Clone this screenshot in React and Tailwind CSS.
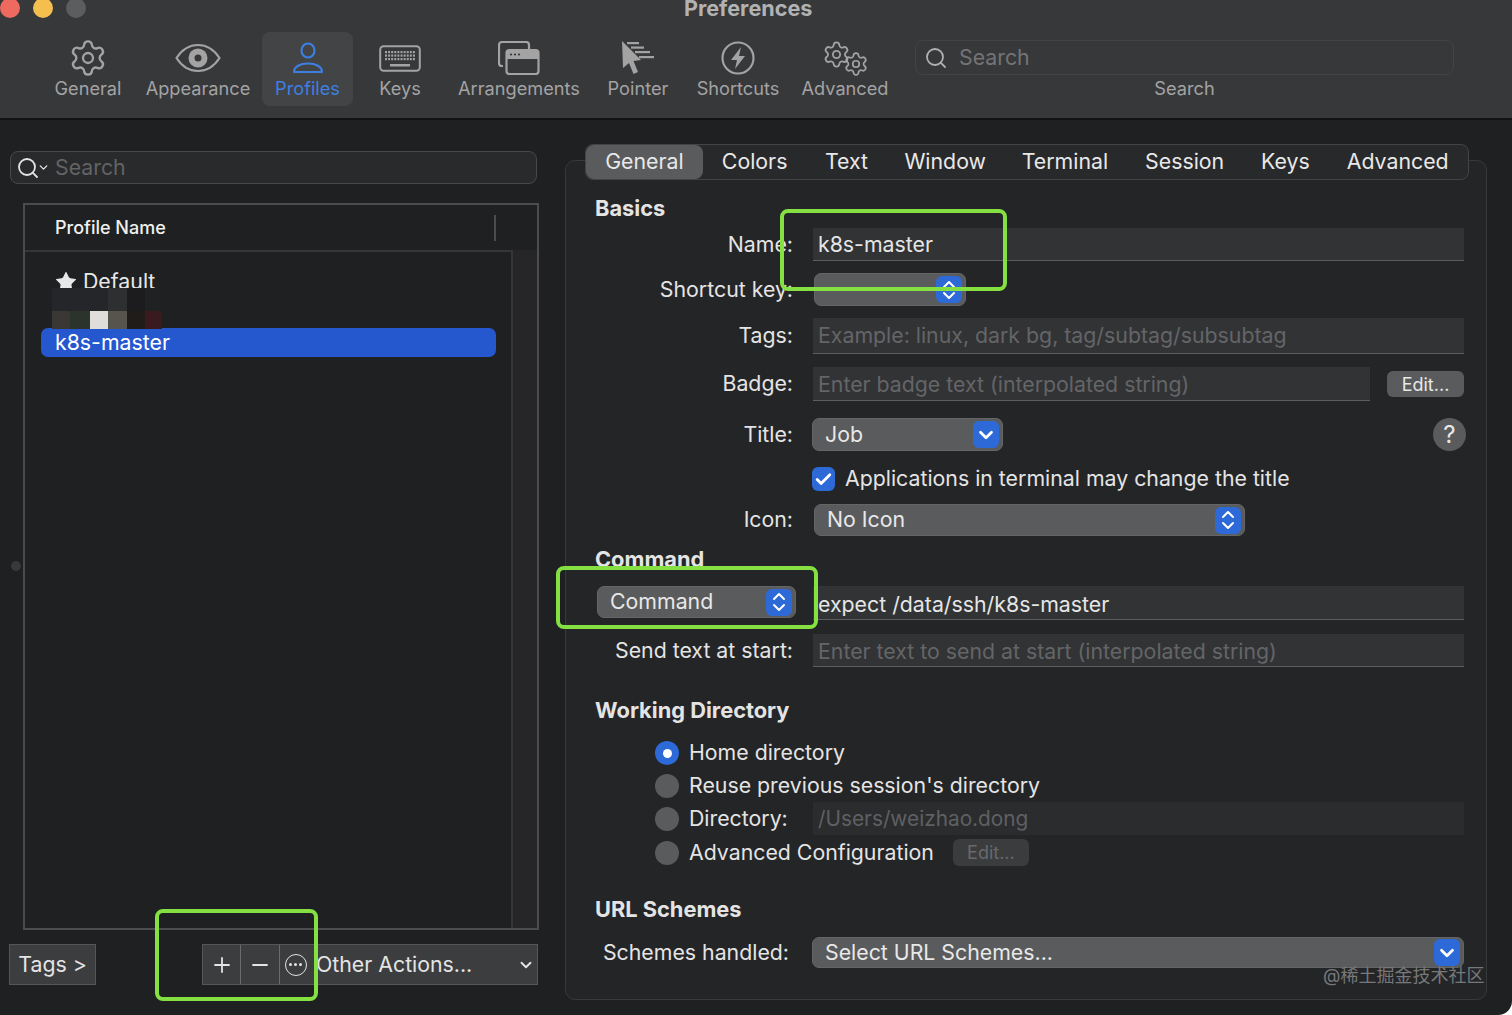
import { Settings, ChevronDown, Check, Plus, Minus, Search, Star } from "lucide-react";

const font = { fontFamily: "Inter, 'Noto Sans CJK SC', sans-serif" };

const EyeIcon = () => (
  <svg width="46" height="30" viewBox="0 0 46 30" fill="none">
    <path d="M1.500 15C7 6.500 14.500 2 23 2s16 4.500 21.500 13C39 23.500 31.500 28 23 28S7 23.500 1.500 15z" stroke="#a3a3a3" strokeWidth="2.200" />
    <circle cx="23" cy="15" r="9.500" fill="#a3a3a3" />
    <circle cx="23" cy="15" r="3.500" fill="#37383a" />
  </svg>
);

const UserIcon = () => (
  <svg width="32" height="32" viewBox="0 0 32 32" fill="none" stroke="#3d7fe0" strokeWidth="2.200">
    <ellipse cx="16" cy="8.500" rx="6.500" ry="7" />
    <path d="M2 30c0-5.500 6-8.500 14-8.500s14 3 14 8.500z" strokeLinejoin="round" />
  </svg>
);

const KeyboardIcon = () => (
  <svg width="42" height="27" viewBox="0 0 42 27" fill="none">
    <rect x="1.200" y="1.200" width="39.600" height="24.600" rx="3.500" stroke="#a3a3a3" strokeWidth="2" />
    {[0, 1, 2].map((row) =>
      [0, 1, 2, 3, 4, 5, 6, 7, 8, 9].map((col) => (
        <rect key={`${row}-${col}`} x={6 + col * 3.100} y={6 + row * 3.500} width="2" height="2.200" fill="#a3a3a3" />
      ))
    )}
    <rect x="11" y="19" width="20" height="2.500" fill="#a3a3a3" />
  </svg>
);

const WindowsIcon = () => (
  <svg width="42" height="34" viewBox="0 0 42 34" fill="none" stroke="#a3a3a3" strokeWidth="2.200">
    <path d="M5 25H4a3 3 0 0 1-3-3V4a3 3 0 0 1 3-3h24a3 3 0 0 1 3 3v5" />
    <rect x="8.500" y="9" width="32" height="24" rx="3" />
    <path d="M9 10h31v8H9z" fill="#a3a3a3" stroke="none" />
    <circle cx="13" cy="13.500" r="1.100" fill="#37383a" stroke="none" />
    <circle cx="17" cy="13.500" r="1.100" fill="#37383a" stroke="none" />
    <circle cx="21" cy="13.500" r="1.100" fill="#37383a" stroke="none" />
  </svg>
);

const PointerIcon = () => (
  <svg width="34" height="34" viewBox="0 0 34 34" fill="#a3a3a3">
    <path d="M1 0l19 19-7.500 1 4.500 11-4.500 2-4.500-11L2 27z" />
    <rect x="6" y="1" width="12" height="2.200" />
    <rect x="10" y="5.500" width="13" height="2.200" />
    <rect x="14" y="10" width="15" height="2.200" />
    <rect x="18" y="15" width="15" height="2.200" />
  </svg>
);

const ShortcutIcon = () => (
  <svg width="34" height="34" viewBox="0 0 34 34" fill="none">
    <circle cx="17" cy="17" r="15.500" stroke="#a3a3a3" strokeWidth="2.200" />
    <path d="M20 6L10 19h6l-2 9 10-13h-6z" fill="#a3a3a3" />
  </svg>
);

const GearsIcon = () => (
  <div className="relative w-[47px] h-[37px]">
    <Settings size={29} strokeWidth={1.500} color="#a3a3a3" className="absolute left-0 top-0" />
    <Settings size={26} strokeWidth={1.600} color="#a3a3a3" className="absolute right-0 bottom-0" />
  </div>
);

const UpDownIcon = () => (
  <svg width="16" height="24" viewBox="0 0 16 24" fill="none" stroke="#ffffff" strokeWidth="2" strokeLinecap="round" strokeLinejoin="round">
    <path d="M3 9l5-5 5 5M3 15l5 5 5-5" />
  </svg>
);

const toolbarItems = [
  { label: "General", w: "w-[92px]", icon: <Settings size={40} strokeWidth={1.400} color="#a3a3a3" /> },
  { label: "Appearance", w: "w-[128px]", icon: <EyeIcon /> },
  { label: "Profiles", w: "w-[91px]", icon: <UserIcon />, active: true },
  { label: "Keys", w: "w-[94px]", icon: <KeyboardIcon /> },
  { label: "Arrangements", w: "w-[144px]", icon: <WindowsIcon /> },
  { label: "Pointer", w: "w-[94px]", icon: <PointerIcon /> },
  { label: "Shortcuts", w: "w-[106px]", icon: <ShortcutIcon /> },
  { label: "Advanced", w: "w-[108px]", icon: <GearsIcon /> },
];

const tabs = [
  { label: "General", w: "w-[117px]" },
  { label: "Colors", w: "w-[104px]" },
  { label: "Text", w: "w-[80px]" },
  { label: "Window", w: "w-[118px]" },
  { label: "Terminal", w: "w-[122px]" },
  { label: "Session", w: "w-[118px]" },
  { label: "Keys", w: "w-[84px]" },
  { label: "Advanced", w: "w-[141px]" },
];

const Stepper = ({ single }) => (
  <div className="w-[26px] h-[27px] rounded-[6px] bg-[#2d6ad8] flex items-center justify-center shrink-0 text-white">
    {single ? <ChevronDown size={22} strokeWidth={3} /> : <UpDownIcon />}
  </div>
);

const Popup = ({ text, single, className }) => (
  <div className={`flex items-center justify-between rounded-[7px] bg-[#5a5b5d] border border-[#646567] pl-[12px] pr-[3px] text-[#e8e8e8] ${className}`}>
    <span>{text}</span>
    <Stepper single={single} />
  </div>
);

const TextField = ({ text, placeholder, className = "flex-1" }) => (
  <div className={`h-full flex items-center pl-[5px] bg-[#323335] border-b border-[#5c5d5f] ${placeholder ? "text-[#646567]" : "text-[#e6e6e6]"} ${className}`}>
    {text || placeholder}
  </div>
);

const Label = ({ children }) => <div className="w-[227px] text-right text-[#e4e4e4] shrink-0">{children}</div>;

const Heading = ({ children, className }) => (
  <div className={`h-[24px] flex items-center font-bold text-[21.800px] text-[#e4e4e4] ml-[29px] ${className}`}>{children}</div>
);

const Row = ({ label, className, children }) => (
  <div className={`flex items-center gap-[20px] pr-[22px] ${className}`}>
    <Label>{label}</Label>
    {children}
  </div>
);

const Radio = ({ on }) => (
  <div className={`w-[24px] h-[24px] rounded-full flex items-center justify-center shrink-0 ${on ? "bg-[#2d6ad8]" : "bg-[#5a5b5d]"}`}>
    {on && <div className="w-[9px] h-[9px] rounded-full bg-white" />}
  </div>
);

const RadioRow = ({ on, label, className, children }) => (
  <div className={`flex items-center pl-[89px] pr-[22px] text-[#e4e4e4] ${className}`}>
    <Radio on={on} />
    <span className="ml-[10px]">{label}</span>
    {children}
  </div>
);

const GreenBox = ({ className }) => (
  <div className={`absolute border-[4px] border-[#84e141] rounded-[8px] pointer-events-none z-20 ${className}`} />
);

export default function App() {
  return (
    <div style={font} className="relative w-[1512px] h-[1015px] overflow-hidden bg-[#1f2022] rounded-br-[14px] text-[21.300px]">
      {/* Toolbar */}
      <div className="h-[120px] bg-[#37383a] border-b-2 border-[#111214]">
        <div className="flex items-center h-[16px] mb-[16px]">
          <div className="w-[20px] h-[20px] rounded-full bg-[#ee6a5f]" />
          <div className="w-[20px] h-[20px] rounded-full bg-[#f4bf4f] ml-[13px]" />
          <div className="w-[20px] h-[20px] rounded-full bg-[#5c5d5f] ml-[13px]" />
          <div className="ml-[598px] text-[21.600px] font-bold text-[#b2b2b2]">Preferences</div>
        </div>
        <div className="flex pl-[42px]">
          {toolbarItems.map((item) => (
            <div
              key={item.label}
              className={`${item.w} h-[74px] pt-[1px] rounded-[8px] flex flex-col items-center ${item.active ? "bg-[#434446]" : ""}`}
            >
              <div className="h-[50px] flex items-center justify-center">{item.icon}</div>
              <div className={`text-[18.200px] leading-[13px] mt-[-1px] ${item.active ? "text-[#3d7fe0]" : "text-[#a3a3a3]"}`}>{item.label}</div>
            </div>
          ))}
          <div className="ml-[16px] w-[539px] flex flex-col items-center">
            <div className="mt-[8px] w-full h-[35px] rounded-[8px] border border-[#434446] flex items-center pl-[8px] text-[#737476]">
              <Search size={24} strokeWidth={1.800} color="#b0b0b0" />
              <span className="ml-[11px]">Search</span>
            </div>
            <div className="mt-[2px] text-[18.200px] leading-[22px] text-[#a3a3a3]">Search</div>
          </div>
        </div>
      </div>

      <div className="flex">
        {/* Profile list */}
        <div className="w-[565px] shrink-0">
          <div className="ml-[10px] mt-[31px] w-[527px] h-[33px] rounded-[8px] bg-[#292a2c] border border-[#47484a] flex items-center pl-[5px] text-[#626365]">
            <Search size={24} strokeWidth={1.800} color="#e4e4e4" />
            <ChevronDown size={13} strokeWidth={2.500} color="#e4e4e4" className="-ml-[3px]" />
            <span className="ml-[5px]">Search</span>
          </div>
          <div className="ml-[23px] mt-[19px] w-[516px] h-[727px] border-2 border-[#4b4c4e] flex flex-col">
            <div className="h-[45px] flex items-center shrink-0">
              <div className="w-[471px] h-[26px] flex items-center pl-[30px] border-r-2 border-[#4b4c4e] text-[18px] font-medium text-[#f0f0f0]">
                Profile Name
              </div>
            </div>
            <div className="flex flex-1">
              <div className="w-[488px] border-t-2 border-r-2 border-[#35363a] pt-[19px]">
                <div className="h-[22px] flex items-center pl-[29px] text-[#e8e8e8]">
                  <Star size={24} fill="#e8e8e8" strokeWidth={0} />
                  <span className="ml-[5px]">Default</span>
                </div>
                <div className="mt-[35px] ml-[16px] w-[455px] h-[29px] rounded-[7px] bg-[#2557cf] flex items-center pl-[14px] text-white">
                  k8s-master
                </div>
              </div>
              <div className="flex-1 bg-[#262628]" />
            </div>
          </div>
          <div className="mt-[14px] flex h-[41px] ml-[9px] w-[529px] text-[#e4e4e4]">
            <div className="w-[87px] bg-[#3c3d3f] border border-[#555658] flex items-center justify-center">Tags &gt;</div>
            <div className="ml-[106px] flex-1 flex bg-[#3c3d3f] border border-[#555658]">
              <div className="w-[38px] border-r border-[#6b6c6e] flex items-center justify-center">
                <Plus size={24} strokeWidth={1.800} />
              </div>
              <div className="w-[39px] border-r border-[#6b6c6e] flex items-center justify-center">
                <Minus size={24} strokeWidth={1.800} />
              </div>
              <div className="w-[31px] flex items-center justify-center">
                <div className="w-[22px] h-[22px] rounded-full border-[1.500px] border-[#e4e4e4] flex items-center justify-center gap-[2px] shrink-0">
                  <div className="w-[3px] h-[3px] rounded-full bg-[#e4e4e4]" />
                  <div className="w-[3px] h-[3px] rounded-full bg-[#e4e4e4]" />
                  <div className="w-[3px] h-[3px] rounded-full bg-[#e4e4e4]" />
                </div>
              </div>
              <div className="flex-1 flex items-center justify-between pl-[5px] pr-[2px]">
                <span>Other Actions...</span>
                <ChevronDown size={18} strokeWidth={2.500} />
              </div>
            </div>
          </div>
        </div>

        {/* Profile settings */}
        <div className="w-[922px] flex flex-col">
          <div className="relative z-10 ml-[20px] mt-[24px] w-[884px] h-[36px] rounded-[8px] bg-[#28292b] border border-[#434446] flex items-center text-[#e8e8e8]">
            {tabs.map((tab, i) => (
              <div
                key={tab.label}
                className={`${tab.w} h-full flex items-center justify-center ${i === 0 ? "rounded-[8px] bg-[#5a5b5d]" : ""}`}
              >
                {tab.label}
              </div>
            ))}
          </div>
          <div className="-mt-[20px] h-[840px] rounded-[10px] bg-[#242527] border border-[#38393b] pt-[35px]">
            <Heading>Basics</Heading>
            <Row label="Name:" className="mt-[8px] h-[33px]">
              <TextField text="k8s-master" className="flex-1 pt-[2px]" />
            </Row>
            <Row label="Shortcut key:" className="mt-[12px] h-[33px]">
              <Popup className="w-[152px] h-full ml-[1px]" />
            </Row>
            <Row label="Tags:" className="mt-[12px] h-[36px]">
              <TextField placeholder="Example: linux, dark bg, tag/subtag/subsubtag" />
            </Row>
            <Row label="Badge:" className="mt-[13px] h-[34px]">
              <TextField placeholder="Enter badge text (interpolated string)" className="flex-1 pt-[3px]" />
              <div className="-ml-[3px] w-[77px] h-[26px] rounded-[6px] bg-[#5a5b5d] text-[18px] text-[#e8e8e8] flex items-center justify-center">Edit...</div>
            </Row>
            <Row label="Title:" className="mt-[17px] h-[33px]">
              <Popup text="Job" single className="w-[191px] h-full -ml-[1px]" />
              <div className="ml-auto -mr-[2px] w-[33px] h-[33px] rounded-full bg-[#5a5b5d] flex items-center justify-center text-[24px] text-[#e8e8e8]">?</div>
            </Row>
            <div className="mt-[16px] h-[24px] flex items-center pl-[246px] text-[#e4e4e4]">
              <div className="w-[23px] h-[24px] rounded-[6px] bg-[#2d6ad8] flex items-center justify-center">
                <Check size={19} strokeWidth={3.500} color="#ffffff" />
              </div>
              <span className="ml-[10px]">Applications in terminal may change the title</span>
            </div>
            <Row label="Icon:" className="mt-[13px] h-[32px]">
              <Popup text="No Icon" className="w-[431px] h-full ml-[1px]" />
            </Row>
            <Heading className="mt-[11px]">Command</Heading>
            <div className="mt-[15px] h-[34px] flex items-center pl-[31px] pr-[22px]">
              <Popup text="Command" className="w-[199px] h-[32px] -mt-[2px]" />
              <div className="ml-[17px] flex-1 h-full">
                <TextField text="expect /data/ssh/k8s-master" className="w-full pt-[4px]" />
              </div>
            </div>
            <Row label="Send text at start:" className="mt-[14px] h-[33px]">
              <TextField placeholder="Enter text to send at start (interpolated string)" className="flex-1 pt-[3px]" />
            </Row>
            <Heading className="mt-[31px]">Working Directory</Heading>
            <RadioRow on label="Home directory" className="mt-[19px] h-[24px]" />
            <RadioRow label="Reuse previous session's directory" className="mt-[9px] h-[24px]" />
            <div className="mt-[4px] h-[33px] flex items-center pl-[89px] pr-[22px] text-[#e4e4e4]">
              <Radio />
              <span className="ml-[10px] w-[124px]">Directory:</span>
              <div className="flex-1 h-full flex items-center pl-[5px] bg-[#2b2c2e] text-[20.800px] text-[#5f6062]">/Users/weizhao.dong</div>
            </div>
            <RadioRow label="Advanced Configuration" className="mt-[4px] h-[27px]">
              <div className="ml-[19px] w-[76px] h-[27px] rounded-[6px] bg-[#3b3c3e] text-[18px] text-[#68696b] flex items-center justify-center">Edit...</div>
            </RadioRow>
            <Heading className="mt-[31px]">URL Schemes</Heading>
            <div className="mt-[16px] h-[31px] flex items-center pr-[22px]">
              <div className="w-[223px] text-right text-[#e4e4e4] shrink-0">Schemes handled:</div>
              <Popup text="Select URL Schemes..." single className="ml-[23px] flex-1 h-full" />
            </div>
          </div>
        </div>
      </div>

      {/* Blurred-out row over the profile list */}
      <div className="absolute left-[52px] top-[288px] z-10 flex flex-col">
        <div className="flex h-[23px]">
          <div className="w-[56px] bg-[#25262a]" />
          <div className="w-[19px] bg-[#2e2f31]" />
          <div className="w-[18px] bg-[#1c1c1e]" />
          <div className="w-[15px] bg-[#202123]" />
        </div>
        <div className="flex h-[18px]">
          <div className="w-[18px] bg-[#3a3835]" />
          <div className="w-[20px] bg-[#2b342c]" />
          <div className="w-[18px] bg-[#e0dedb]" />
          <div className="w-[19px] bg-[#57544e]" />
          <div className="w-[18px] bg-[#201c1a]" />
          <div className="w-[17px] bg-[#3a1a1c]" />
        </div>
      </div>
      <div className="absolute left-[11px] top-[561px] w-[10px] h-[10px] rounded-full bg-[#38393b]" />

      {/* Annotation boxes */}
      <GreenBox className="left-[780px] top-[209px] w-[227px] h-[82px]" />
      <GreenBox className="left-[556px] top-[566px] w-[262px] h-[63px]" />
      <GreenBox className="left-[155px] top-[909px] w-[163px] h-[92px]" />

      <div className="absolute left-[1323px] top-[964px] z-20 text-[18px] leading-[24px] text-[#77787a]">@稀土掘金技术社区</div>
    </div>
  );
}
